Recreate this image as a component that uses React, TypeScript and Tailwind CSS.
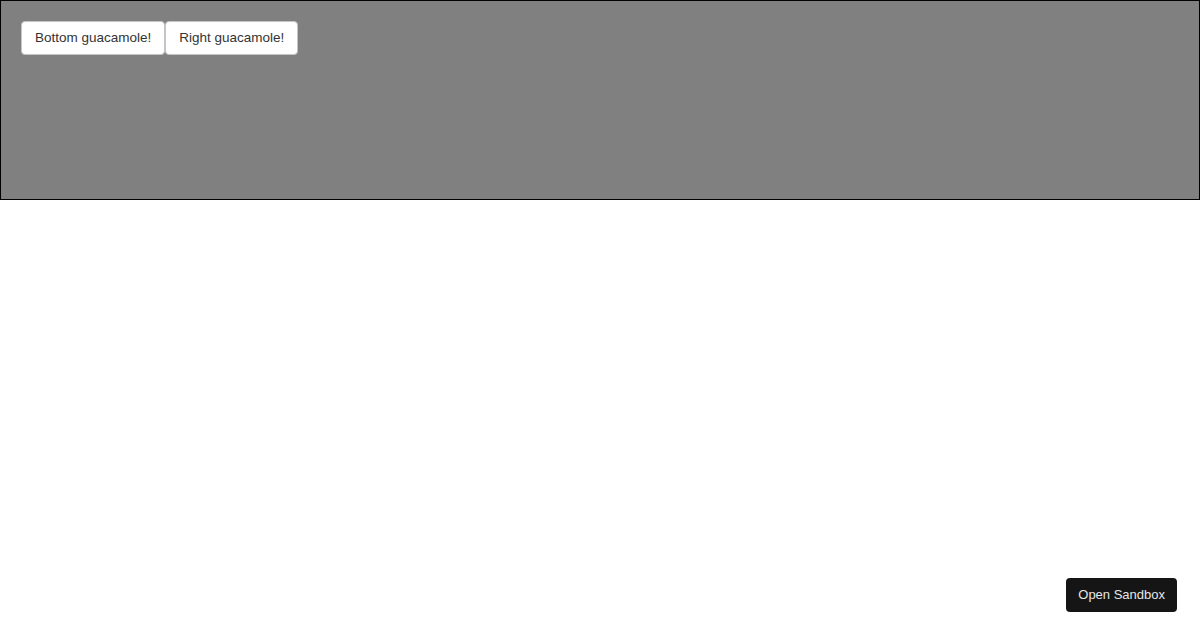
import React from 'react';

const App: React.FC = () => (
  <div className="min-h-[630px] bg-white font-['Liberation_Sans',Arial,sans-serif]">
    {/* Container */}
    <div className="flex h-[200px] items-start border border-black bg-[#808080] p-5">
      <button className="h-[34px] rounded-[4px] border border-[#c4c4c4] bg-white px-[13px] text-[13.5px] text-[#333]">
        Bottom guacamole!
      </button>
      <button className="h-[34px] rounded-[4px] border border-[#c4c4c4] bg-white px-[13px] text-[13.5px] text-[#333]">
        Right guacamole!
      </button>
    </div>

    {/* Sandbox link */}
    <button className="fixed bottom-[18px] right-[23px] h-[34px] rounded-[4px] bg-[#151515] px-3 text-[13px] text-[#e6e6e6]">
      Open Sandbox
    </button>
  </div>
);

export default App;
